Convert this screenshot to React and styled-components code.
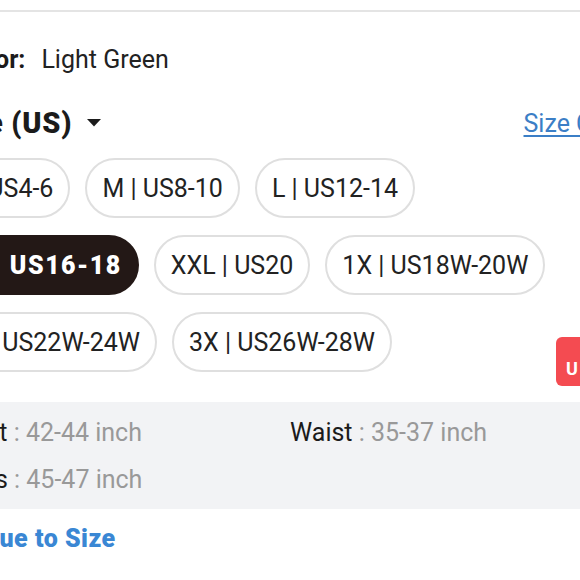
import React from "react";
import styled, { createGlobalStyle } from "styled-components";

const Global = createGlobalStyle`
  html, body { margin: 0; padding: 0; background: #fff; overflow: hidden; }
  body { font-family: Roboto, "Noto Sans", Arial, sans-serif; color: #222; }
`;

const Screen = styled.div`
  position: relative;
  width: 580px;
  height: 580px;
  overflow: hidden;
`;

const Page = styled.div`
  margin-left: -63px;
  width: 760px;
`;

const Divider = styled.div`
  margin-top: 10px;
  height: 2px;
  background: #e4e4e4;
`;

const ColorRow = styled.div`
  margin-top: 32px;
  padding-left: 21px;
  display: flex;
  align-items: baseline;
  gap: 16px;
  font-size: 25px;
  line-height: 32px;
`;

const Label = styled.span`
  font-weight: 700;
  color: #1b1b1b;
`;

const Value = styled.span`
  color: #222;
`;

const SizeHeader = styled.div`
  box-sizing: border-box;
  margin-top: 27px;
  padding-left: 7px;
  width: 700px;
  height: 40px;
  display: flex;
  align-items: center;
  justify-content: space-between;
`;

const Title = styled.div`
  display: flex;
  align-items: center;
  gap: 15px;
  font-size: 29px;
  font-weight: 900;
  letter-spacing: 0.7px;
  color: #1b1b1b;
`;

const ChartLink = styled.a`
  font-size: 25px;
  color: #3b7ec6;
  text-decoration: underline;
  text-underline-offset: 3px;
  text-decoration-thickness: 2px;
  white-space: nowrap;
`;

const ChipList = styled.div`
  margin-top: 15px;
  width: 625px;
  display: flex;
  flex-wrap: wrap;
  gap: 17px 15px;
`;

const Chip = styled.button`
  box-sizing: border-box;
  height: 60px;
  padding: 0 15px;
  border-radius: 30px;
  border: 2px solid ${(p) => (p.$active ? "#231816" : "#dfdfdf")};
  background: ${(p) => (p.$active ? "#231816" : "#fff")};
  color: ${(p) => (p.$active ? "#fff" : "#222")};
  font-family: Roboto, "Noto Sans", Arial, sans-serif;
  font-size: 25px;
  font-weight: ${(p) => (p.$active ? 900 : 400)};
  letter-spacing: ${(p) => (p.$active ? "1.5px" : "0")};
  white-space: nowrap;
  display: inline-flex;
  align-items: center;
`;

const Measures = styled.div`
  margin-top: 30px;
  background: #f2f3f5;
  padding: 7px 0 6px 20px;
  display: grid;
  grid-template-columns: 333px 1fr;
  font-size: 25px;
  line-height: 47px;
`;

const Measure = styled.div`
  color: #1b1b1b;
  white-space: nowrap;
`;

const MeasureValue = styled.span`
  color: #999;
`;

const TrueToSize = styled.div`
  margin-top: 14px;
  padding-left: 37px;
  font-size: 25px;
  font-weight: 900;
  line-height: 32px;
  color: #3a87d4;
  letter-spacing: 0.5px;
`;

const Badge = styled.div`
  position: absolute;
  left: 556px;
  top: 337px;
  width: 70px;
  height: 49px;
  box-sizing: border-box;
  border-radius: 6px;
  background: #f44b51;
  color: #fff;
  font-size: 18px;
  font-weight: 700;
  padding: 21px 0 0 10px;
  line-height: 22px;
`;

const Caret = () => (
  <svg width="14" height="8" viewBox="0 0 14 8">
    <path d="M0 0 H14 L7 7.5 Z" fill="#1b1b1b" />
  </svg>
);

const sizes = [
  "S | US4-6",
  "M | US8-10",
  "L | US12-14",
  "XL | US16-18",
  "XXL | US20",
  "1X | US18W-20W",
  "2X | US22W-24W",
  "3X | US26W-28W",
];

export default function App() {
  return (
    <Screen>
      <Global />
      <Page>
        <Divider />
        <ColorRow>
          <Label>Color:</Label>
          <Value>Light Green</Value>
        </ColorRow>
        <SizeHeader>
          <Title>
            <span>Size (US)</span>
            <Caret />
          </Title>
          <ChartLink href="#">Size Chart</ChartLink>
        </SizeHeader>
        <ChipList>
          {sizes.map((s) => (
            <Chip key={s} $active={s.startsWith("XL |")}>
              {s}
            </Chip>
          ))}
        </ChipList>
        <Measures>
          <Measure>
            Bust <MeasureValue>: 42-44 inch</MeasureValue>
          </Measure>
          <Measure>
            Waist <MeasureValue>: 35-37 inch</MeasureValue>
          </Measure>
          <Measure>
            Hips <MeasureValue>: 45-47 inch</MeasureValue>
          </Measure>
        </Measures>
        <TrueToSize>True to Size</TrueToSize>
      </Page>
      <Badge>U</Badge>
    </Screen>
  );
}
